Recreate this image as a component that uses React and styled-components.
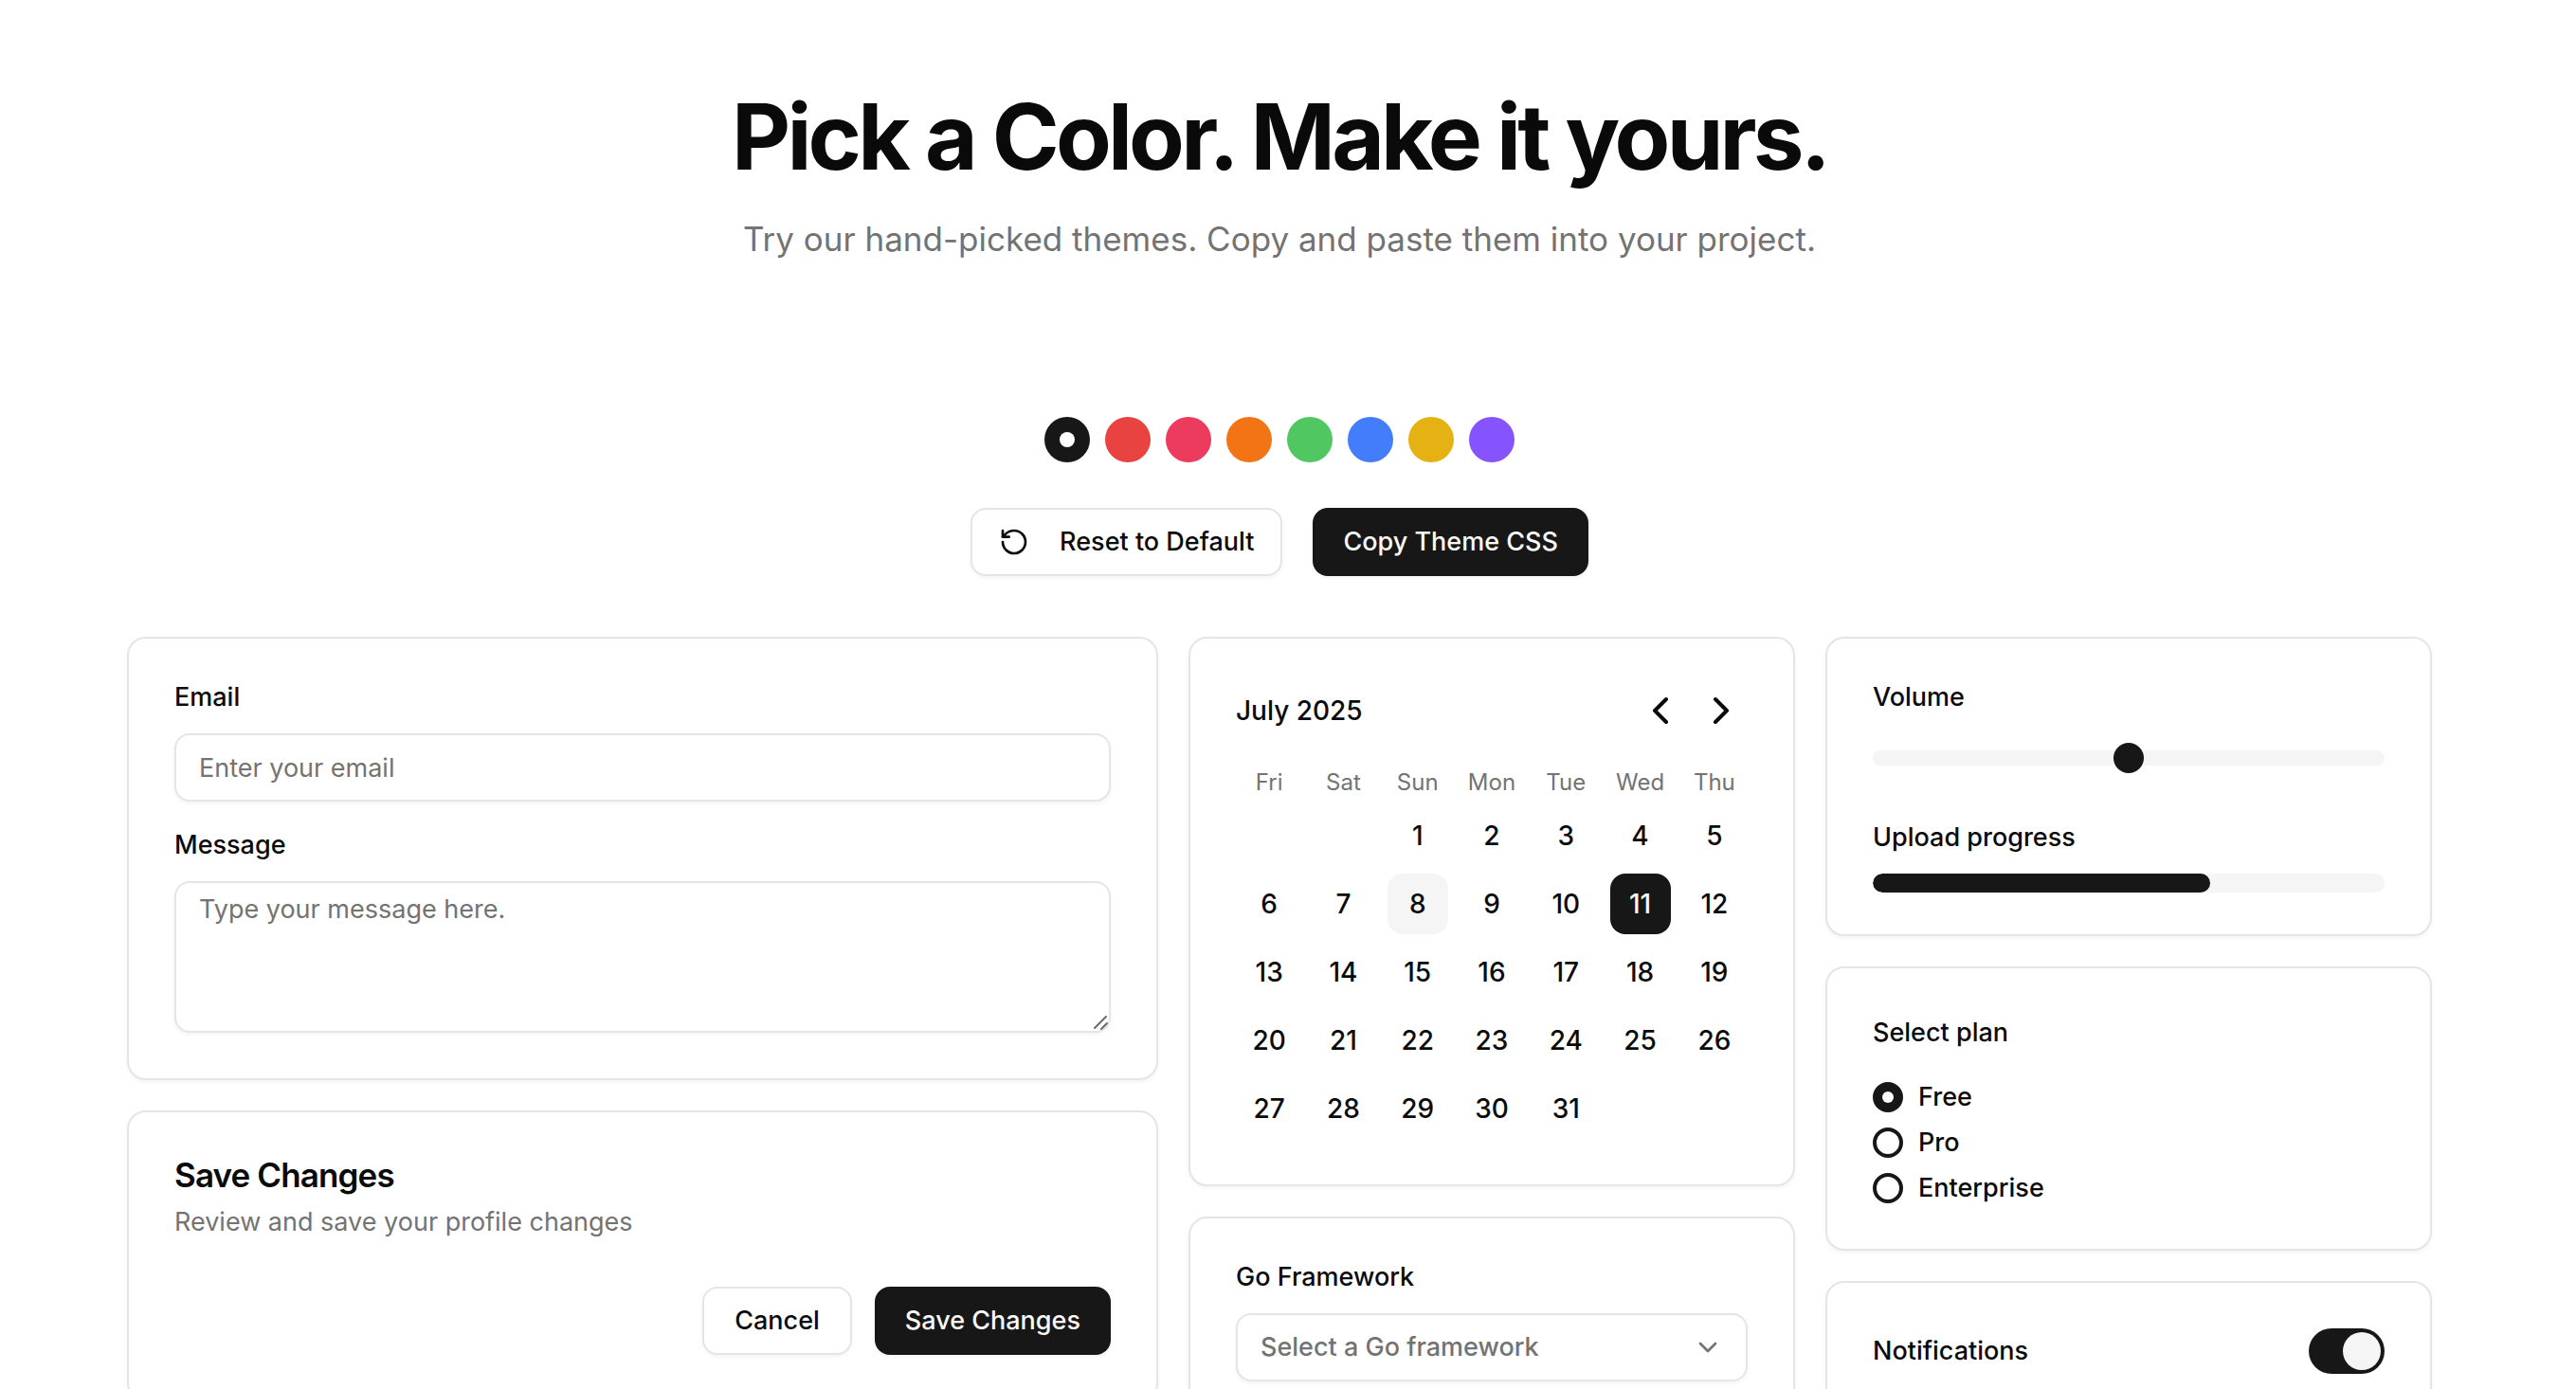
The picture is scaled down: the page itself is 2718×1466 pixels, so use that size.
import React, { useState } from "react";
import styled, { createGlobalStyle, css } from "styled-components";
import { ChevronDown, ChevronLeft, ChevronRight, RotateCcw } from "lucide-react";

const color = {
  background: "#ffffff",
  foreground: "#0a0a0a",
  primary: "#171717",
  onPrimary: "#fafafa",
  muted: "#f5f5f5",
  mutedText: "#737373",
  border: "#e5e5e5",
};

const GlobalStyle = createGlobalStyle`
  *, *::before, *::after { box-sizing: border-box; }
  html { overflow-x: hidden; }
  body {
    margin: 0;
    background: ${color.background};
    color: ${color.foreground};
    font-family: Inter, "Liberation Sans", sans-serif;
    font-size: 27px;
    line-height: 40px;
    -webkit-font-smoothing: antialiased;
  }
  button, input, select, textarea { font: inherit; color: inherit; margin: 0; }
  button { cursor: pointer; }
`;

const Page = styled.div`
  padding-right: 18px;
`;

const Container = styled.main`
  max-width: 2560px;
  margin: 0 auto;
  padding: 96px 64px 64px;
`;

const Hero = styled.header`
  display: flex;
  flex-direction: column;
  align-items: center;
  gap: 32px;
  text-align: center;
  padding-bottom: 96px;
`;

const Title = styled.h1`
  margin: 0;
  font-size: 96px;
  line-height: 96px;
  font-weight: 700;
  letter-spacing: -0.04em;
`;

const Subtitle = styled.p`
  margin: 0;
  font-size: 35px;
  line-height: 56px;
  color: ${color.mutedText};
`;

const Picker = styled.section`
  display: flex;
  flex-direction: column;
  align-items: center;
  gap: 48px;
  padding: 64px 0;
`;

const SwatchList = styled.div`
  display: flex;
  gap: 16px;
`;

const Swatch = styled.button`
  display: grid;
  place-items: center;
  width: 48px;
  height: 48px;
  padding: 0;
  border: 0;
  border-radius: 50%;
  background: ${(p) => p.$color};

  &::after {
    content: "";
    width: 16px;
    height: 16px;
    border-radius: 50%;
    background: ${(p) => (p.$active ? color.background : "transparent")};
  }
`;

const Actions = styled.div`
  display: flex;
  justify-content: ${(p) => (p.$end ? "flex-end" : "center")};
  gap: ${(p) => (p.$end ? "24px" : "32px")};
`;

const Button = styled.button`
  display: inline-flex;
  align-items: center;
  justify-content: center;
  gap: 32px;
  height: 72px;
  padding: 0 ${(p) => (p.$icon ? "28px" : "32px")};
  border: 2px solid ${color.border};
  border-radius: 16px;
  background: ${color.background};
  font-weight: 500;
  white-space: nowrap;
  box-shadow: 0 2px 4px rgba(0, 0, 0, 0.05);

  ${(p) =>
    p.$primary &&
    css`
      border: 0;
      background: ${color.primary};
      color: ${color.onPrimary};
    `}
`;

const Board = styled.div`
  display: grid;
  grid-template-columns: 1.7fr 1fr 1fr;
  gap: 32px;
  align-items: start;
`;

const Column = styled.div`
  display: flex;
  flex-direction: column;
  gap: 32px;
  min-width: 0;
`;

const Card = styled.section`
  display: flex;
  flex-direction: column;
  gap: ${(p) => p.$gap || "32px"};
  padding: 48px 48px ${(p) => (p.$tight ? "44px" : "48px")};
  border: 2px solid ${color.border};
  border-radius: 20px;
  background: ${color.background};
  box-shadow: 0 2px 4px rgba(0, 0, 0, 0.05);
`;

const Field = styled.div`
  display: flex;
  flex-direction: column;
  gap: 24px;
`;

const Label = styled.label`
  line-height: 28px;
  font-weight: 500;
`;

const control = css`
  display: block;
  width: 100%;
  border: 2px solid ${color.border};
  border-radius: 16px;
  background: transparent;
  box-shadow: 0 2px 4px rgba(0, 0, 0, 0.05);
  outline: none;

  &::placeholder {
    color: ${color.mutedText};
    opacity: 1;
  }
`;

const TextInput = styled.input`
  ${control}
  height: 72px;
  padding: 0 24px;
`;

const TextAreaWrap = styled.div`
  position: relative;
`;

const TextArea = styled.textarea`
  ${control}
  height: 160px;
  padding: 8px 24px;
  resize: none;
`;

const Grip = styled.svg`
  position: absolute;
  right: 2px;
  bottom: 2px;
  width: 16px;
  height: 16px;
  pointer-events: none;
`;

const SelectWrap = styled.div`
  position: relative;

  svg {
    position: absolute;
    top: 20px;
    right: 26px;
    color: ${color.mutedText};
    pointer-events: none;
  }
`;

const Select = styled.select`
  ${control}
  appearance: none;
  height: 72px;
  padding: 0 72px 0 24px;
  font-weight: 500;
  color: ${color.mutedText};
`;

const CardHeading = styled.div`
  display: flex;
  flex-direction: column;
  gap: 12px;
  padding-bottom: 16px;
`;

const CardTitle = styled.h2`
  margin: 0;
  font-size: 35px;
  line-height: 36px;
  font-weight: 600;
  letter-spacing: -0.025em;
`;

const CardText = styled.p`
  margin: 0;
  color: ${color.mutedText};
`;

const CalendarHeader = styled.div`
  display: flex;
  align-items: center;
  justify-content: space-between;
`;

const Month = styled.h2`
  margin: 0;
  font-size: 28px;
  font-weight: 500;
`;

const MonthNav = styled.div`
  display: flex;
  gap: 8px;
`;

const NavButton = styled.button`
  display: grid;
  place-items: center;
  width: 56px;
  height: 56px;
  padding: 0;
  border: 0;
  background: none;
`;

const CalendarTable = styled.table`
  table-layout: fixed;
  width: calc(100% + 8px);
  margin: 0 -4px;
  border-collapse: collapse;

  th {
    height: 32px;
    padding: 0;
    font-size: 24px;
    line-height: 32px;
    font-weight: 400;
    color: ${color.mutedText};
  }

  td {
    padding: 8px 0 0;
    text-align: center;
  }
`;

const Day = styled.button`
  display: block;
  width: 64px;
  height: 64px;
  margin: 0 auto;
  padding: 0;
  border: 0;
  border-radius: 16px;
  font-size: 28px;
  font-weight: 500;
  background: ${(p) =>
    p.$selected ? color.primary : p.$today ? color.muted : "transparent"};
  color: ${(p) => (p.$selected ? color.onPrimary : color.foreground)};
`;

const Slider = styled.input`
  appearance: none;
  display: block;
  width: 100%;
  height: 52px;
  background: transparent;

  &::-webkit-slider-runnable-track {
    height: 16px;
    border-radius: 8px;
    background: ${color.muted};
  }

  &::-webkit-slider-thumb {
    appearance: none;
    width: 32px;
    height: 32px;
    margin-top: -8px;
    border-radius: 50%;
    background: ${color.primary};
  }
`;

const Progress = styled.progress`
  appearance: none;
  display: block;
  width: 100%;
  height: 20px;
  border: 0;
  border-radius: 10px;
  overflow: hidden;

  &::-webkit-progress-bar {
    background: ${color.muted};
  }

  &::-webkit-progress-value {
    border-radius: 10px;
    background: ${color.primary};
  }
`;

const Plans = styled.fieldset`
  display: flex;
  flex-direction: column;
  gap: 16px;
  margin: 0;
  padding: 0;
  border: 0;
`;

const Legend = styled.legend`
  padding: 0 0 32px;
  font-weight: 500;
`;

const Option = styled.label`
  display: flex;
  align-items: center;
  gap: 16px;
  line-height: 32px;
  font-weight: 500;
`;

const Radio = styled.input`
  appearance: none;
  display: grid;
  place-items: center;
  width: 32px;
  height: 32px;
  border: 4px solid ${color.primary};
  border-radius: 50%;

  &:checked {
    background: ${color.primary};
  }

  &:checked::after {
    content: "";
    width: 12px;
    height: 12px;
    border-radius: 50%;
    background: ${color.background};
  }
`;

const SettingRow = styled.div`
  display: flex;
  align-items: center;
  justify-content: space-between;
`;

const Switch = styled.input`
  appearance: none;
  display: flex;
  justify-content: flex-start;
  width: 80px;
  height: 48px;
  padding: 4px;
  border-radius: 24px;
  background: ${color.border};

  &:checked {
    justify-content: flex-end;
    background: ${color.primary};
  }

  &::after {
    content: "";
    width: 40px;
    height: 40px;
    border-radius: 50%;
    background: ${color.muted};
  }
`;

const themes = [
  { name: "Default", value: "#171717" },
  { name: "Red", value: "#e84340" },
  { name: "Rose", value: "#ec3b5d" },
  { name: "Orange", value: "#f37415" },
  { name: "Green", value: "#50c760" },
  { name: "Blue", value: "#437dfb" },
  { name: "Yellow", value: "#e6b213" },
  { name: "Violet", value: "#8654ff" },
];

const weekdays = ["Fri", "Sat", "Sun", "Mon", "Tue", "Wed", "Thu"];

const weeks = [0, 1, 2, 3, 4].map((week) =>
  weekdays.map((_, index) => {
    const day = week * 7 + index - 1;
    return day >= 1 && day <= 31 ? day : null;
  })
);

const plans = ["Free", "Pro", "Enterprise"];

function Calendar() {
  const [selected, setSelected] = useState(11);
  return (
    <Card>
      <CalendarHeader>
        <Month>July 2025</Month>
        <MonthNav>
          <NavButton type="button" aria-label="Previous month">
            <ChevronLeft size={48} />
          </NavButton>
          <NavButton type="button" aria-label="Next month">
            <ChevronRight size={48} />
          </NavButton>
        </MonthNav>
      </CalendarHeader>
      <CalendarTable>
        <thead>
          <tr>
            {weekdays.map((name) => (
              <th key={name} scope="col">{name}</th>
            ))}
          </tr>
        </thead>
        <tbody>
          {weeks.map((week, row) => (
            <tr key={row}>
              {week.map((day, index) => (
                <td key={index}>
                  {day && (
                    <Day
                      type="button"
                      $selected={day === selected}
                      $today={day === 8}
                      onClick={() => setSelected(day)}
                    >
                      {day}
                    </Day>
                  )}
                </td>
              ))}
            </tr>
          ))}
        </tbody>
      </CalendarTable>
    </Card>
  );
}

export default function App() {
  const [theme, setTheme] = useState("Default");
  return (
    <Page>
      <GlobalStyle />
      <Container>
        <Hero>
          <Title>Pick a Color. Make it yours.</Title>
          <Subtitle>
            Try our hand-picked themes. Copy and paste them into your project.
          </Subtitle>
        </Hero>

        <Picker>
          <SwatchList>
            {themes.map((t) => (
              <Swatch
                key={t.name}
                type="button"
                aria-label={t.name}
                aria-pressed={t.name === theme}
                $color={t.value}
                $active={t.name === theme}
                onClick={() => setTheme(t.name)}
              />
            ))}
          </SwatchList>
          <Actions>
            <Button type="button" $icon onClick={() => setTheme("Default")}>
              <RotateCcw size={32} />
              Reset to Default
            </Button>
            <Button type="button" $primary>Copy Theme CSS</Button>
          </Actions>
        </Picker>

        <Board>
          <Column>
            <Card>
              <Field>
                <Label htmlFor="email">Email</Label>
                <TextInput id="email" type="email" placeholder="Enter your email" />
              </Field>
              <Field>
                <Label htmlFor="message">Message</Label>
                <TextAreaWrap>
                  <TextArea id="message" placeholder="Type your message here." />
                  <Grip viewBox="0 0 16 16" fill="none" stroke="#6b6b6b" strokeWidth="2" strokeLinecap="round" aria-hidden="true">
                    <path d="M1 13 13 1M8 14l6-6" />
                  </Grip>
                </TextAreaWrap>
              </Field>
            </Card>
            <Card>
              <CardHeading>
                <CardTitle>Save Changes</CardTitle>
                <CardText>Review and save your profile changes</CardText>
              </CardHeading>
              <Actions $end>
                <Button type="button">Cancel</Button>
                <Button type="button" $primary>Save Changes</Button>
              </Actions>
            </Card>
          </Column>

          <Column>
            <Calendar />
            <Card>
              <Field>
                <Label htmlFor="framework">Go Framework</Label>
                <SelectWrap>
                  <Select id="framework" defaultValue="">
                    <option value="">Select a Go framework</option>
                  </Select>
                  <ChevronDown size={32} />
                </SelectWrap>
              </Field>
            </Card>
          </Column>

          <Column>
            <Card $gap="44px" $tight>
              <Field>
                <Label htmlFor="volume">Volume</Label>
                <Slider id="volume" type="range" min="0" max="100" defaultValue="50" />
              </Field>
              <Field>
                <Label htmlFor="upload">Upload progress</Label>
                <Progress id="upload" max="100" value="66" />
              </Field>
            </Card>
            <Card>
              <Plans>
                <Legend>Select plan</Legend>
                {plans.map((plan) => (
                  <Option key={plan}>
                    <Radio type="radio" name="plan" value={plan} defaultChecked={plan === "Free"} />
                    {plan}
                  </Option>
                ))}
              </Plans>
            </Card>
            <Card>
              <SettingRow>
                <Label htmlFor="notifications">Notifications</Label>
                <Switch id="notifications" type="checkbox" role="switch" defaultChecked />
              </SettingRow>
            </Card>
          </Column>
        </Board>
      </Container>
    </Page>
  );
}
